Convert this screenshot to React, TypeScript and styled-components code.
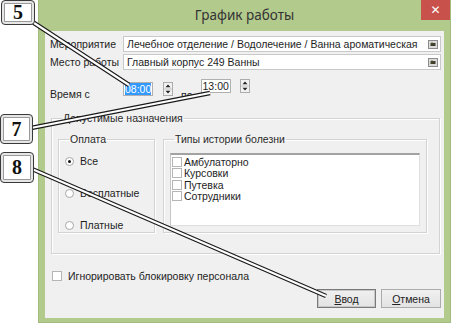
import styled, { createGlobalStyle } from "styled-components";

const GlobalStyle = createGlobalStyle`
  html, body {
    margin: 0;
    padding: 0;
    background: #ffffff;
  }
  body {
    font-family: "Liberation Sans", Arial, sans-serif;
    font-size: 10.5px;
    color: #1e1e1e;
  }
`;

const Stage = styled.div`
  position: relative;
  width: 456px;
  height: 325px;
  overflow: hidden;
  background: #ffffff;
`;

const Window = styled.div`
  margin-left: 38px;
  width: 413px;
  height: 323px;
  box-sizing: border-box;
  background: #b3ca8d;
  border: 1px solid #a3bb7c;
  border-top: none;
  display: flex;
  flex-direction: column;
  padding: 0 6px 4px 6px;
`;

const TitleBar = styled.div`
  height: 31px;
  display: grid;
  grid-template-columns: 1fr auto 1fr;
  margin: 0 -6px;
`;

const Title = styled.div`
  grid-column: 2;
  align-self: center;
  font-family: "Noto Sans", "Open Sans", sans-serif;
  font-size: 13.5px;
  color: #333333;
  padding-bottom: 2px;
`;

const CloseButton = styled.div`
  grid-column: 3;
  justify-self: end;
  align-self: start;
  width: 29px;
  height: 20px;
  background: #c9514c;
  color: #ffffff;
  font-family: "DejaVu Sans", sans-serif;
  font-size: 12px;
  font-weight: bold;
  display: flex;
  align-items: center;
  justify-content: center;
`;

const Content = styled.div`
  flex: 1;
  background: #f0f0f0;
  display: flex;
  flex-direction: column;
  padding: 5px 3px 0 5px;
`;

const FieldRow = styled.div<{ $gap?: number }>`
  display: flex;
  align-items: center;
  height: 16px;
  margin-top: ${(p) => p.$gap ?? 0}px;
`;

const Label = styled.div<{ $width?: number }>`
  width: ${(p) => p.$width ?? 73}px;
  flex-shrink: 0;
  white-space: nowrap;
`;

const Combo = styled.div`
  flex: 1;
  min-width: 0;
  height: 16px;
  box-sizing: border-box;
  background: #ffffff;
  border: 1px solid #c9c9c9;
  display: flex;
  align-items: center;
  padding: 0 2px 0 3px;
  white-space: nowrap;
  overflow: hidden;
`;

const ComboText = styled.span`
  flex: 1;
  min-width: 0;
  overflow: hidden;
  font-size: 10.5px;
`;

const TimeRow = styled.div`
  display: flex;
  align-items: flex-start;
  height: 19px;
  margin-top: 9px;
`;

const TimeLabel = styled.div`
  width: 73px;
  padding-top: 9px;
`;

const SpinGroup = styled.div<{ $top: number; $spin: number }>`
  display: flex;
  align-items: flex-start;
  gap: ${(p) => p.$spin}px;
  margin-top: ${(p) => p.$top}px;
`;

const TimeInput = styled.div`
  width: 30px;
  height: 14px;
  box-sizing: border-box;
  border: 1px solid #b0b0b0;
  background: #ffffff;
  display: flex;
  align-items: center;
  padding-left: 1px;
`;

const Selected = styled.span<{ $on?: boolean }>`
  background: ${(p) => (p.$on ? "#3399ff" : "transparent")};
  color: ${(p) => (p.$on ? "#ffffff" : "#1e1e1e")};
  line-height: 12px;
`;

const ToLabel = styled.div`
  margin: 10px 8px 0 8px;
`;

const GroupBox = styled.fieldset<{ $pad: string }>`
  margin: 0;
  min-width: 0;
  border: 1px solid #d3d3d3;
  box-shadow: inset 1px 1px 0 #ffffff, 1px 1px 0 #ffffff;
  padding: ${(p) => p.$pad};
  display: flex;
  flex-direction: column;
`;

const Legend = styled.legend`
  padding: 0 1px;
  margin-left: 4px;
  line-height: 14px;
  color: #2a2a2a;
`;

const OuterGroup = styled(GroupBox)`
  margin: 13px 1px 0 1px;
  height: 143px;
  box-sizing: border-box;
`;

const GroupsRow = styled.div`
  display: flex;
  gap: 8px;
  flex: 1;
  margin-right: 12px;
`;

const PayGroup = styled(GroupBox)`
  width: 97px;
  flex-shrink: 0;
  box-sizing: border-box;
  gap: 18px;
`;

const TypesGroup = styled(GroupBox)`
  flex: 1;
  box-sizing: border-box;
`;

const RadioRow = styled.div`
  display: flex;
  align-items: center;
  height: 14px;
  gap: 6px;
`;

const RadioDot = styled.span<{ $checked?: boolean }>`
  width: 9px;
  height: 9px;
  box-sizing: border-box;
  border-radius: 50%;
  border: 1px solid #a6a6a6;
  background: #ffffff;
  display: flex;
  align-items: center;
  justify-content: center;
  &::after {
    content: "";
    width: 3px;
    height: 3px;
    border-radius: 50%;
    background: ${(p) => (p.$checked ? "#111111" : "transparent")};
  }
`;

const ListBox = styled.div`
  flex: 1;
  background: #ffffff;
  border: 1px solid #dedede;
  border-top: 2px solid #a2a2a2;
  border-left: 1px solid #c6c6c6;
  padding: 1px 1px;
  display: flex;
  flex-direction: column;
`;

const ListItem = styled.div`
  display: flex;
  align-items: center;
  height: 11.5px;
  gap: 2px;
`;

const Check = styled.span<{ $size?: number }>`
  width: ${(p) => p.$size ?? 9}px;
  height: ${(p) => p.$size ?? 9}px;
  box-sizing: border-box;
  border: 1px solid #b5b5b5;
  background: #ffffff;
  flex-shrink: 0;
`;

const CheckRow = styled.div`
  display: flex;
  align-items: center;
  height: 14px;
  gap: 6px;
  margin: 15px 0 0 2px;
`;

const ButtonRow = styled.div`
  display: flex;
  justify-content: flex-end;
  gap: 5px;
  margin-top: 6px;
`;

const Button = styled.div<{ $default?: boolean; $width: number }>`
  width: ${(p) => p.$width}px;
  height: 19px;
  box-sizing: border-box;
  background: linear-gradient(#f0f0f0, #e3e3e3);
  border: 1px solid ${(p) => (p.$default ? "#7a7a7a" : "#acacac")};
  box-shadow: ${(p) => (p.$default ? "inset 0 0 0 1px #c8c8c8" : "none")};
  display: flex;
  align-items: center;
  justify-content: center;
  color: #222222;
  & u {
    text-decoration: underline;
  }
`;

const Overlay = styled.svg`
  position: absolute;
  left: 0;
  top: 0;
  pointer-events: none;
`;

const Callout = styled.div<{ $x: number; $y: number; $w: number; $h: number }>`
  position: absolute;
  left: ${(p) => p.$x}px;
  top: ${(p) => p.$y}px;
  width: ${(p) => p.$w}px;
  height: ${(p) => p.$h}px;
  box-sizing: border-box;
  border: 1px solid #3a3a3a;
  border-radius: 4px;
  background: #ffffff;
  box-shadow: inset 0 0 0 2px #e6e6e6, inset 0 0 0 3px #9a9a9a;
  display: flex;
  align-items: center;
  justify-content: center;
  font-family: "Liberation Serif", "Times New Roman", serif;
  font-weight: bold;
  font-size: 20px;
  color: #111111;
`;

function DropButton() {
  return (
    <svg width="10" height="9" viewBox="0 0 10 9">
      <rect x="0.5" y="0.5" width="9" height="8" fill="#dcdcdc" stroke="#8c8c8c" />
      <rect x="2.5" y="3" width="5" height="3" fill="#3f3f2a" />
      <rect x="3" y="2.5" width="2" height="1" fill="#6a6a40" />
    </svg>
  );
}

function Spinner() {
  return (
    <svg width="10" height="14" viewBox="0 0 10 14">
      <rect x="0.5" y="0.5" width="9" height="13" fill="#f2f2f2" stroke="#acacac" />
      <line x1="1" y1="7" x2="9" y2="7" stroke="#c4c4c4" />
      <path d="M5 2.5 L7.5 5.2 L2.5 5.2 Z" fill="#222" />
      <path d="M5 11.5 L7.5 8.8 L2.5 8.8 Z" fill="#222" />
    </svg>
  );
}

const pointers = [
  { x1: 31, y1: 21, x2: 129, y2: 85 },
  { x1: 31, y1: 128, x2: 210, y2: 93 },
  { x1: 32, y1: 169, x2: 326, y2: 296 },
];

export default function App() {
  return (
    <>
      <GlobalStyle />
      <Stage>
        <Window>
          <TitleBar>
            <Title>График работы</Title>
            <CloseButton>✕</CloseButton>
          </TitleBar>
          <Content>
            <FieldRow>
              <Label>Мероприятие</Label>
              <Combo>
                <ComboText>Лечебное отделение / Водолечение / Ванна ароматическая</ComboText>
                <DropButton />
              </Combo>
            </FieldRow>
            <FieldRow $gap={2}>
              <Label>Место работы</Label>
              <Combo>
                <ComboText>Главный корпус 249 Ванны</ComboText>
                <DropButton />
              </Combo>
            </FieldRow>
            <TimeRow>
              <TimeLabel>Время с</TimeLabel>
              <SpinGroup $top={3} $spin={10}>
                <TimeInput>
                  <Selected $on>08:00</Selected>
                </TimeInput>
                <Spinner />
              </SpinGroup>
              <ToLabel>по</ToLabel>
              <SpinGroup $top={0} $spin={9}>
                <TimeInput>
                  <Selected>13:00</Selected>
                </TimeInput>
                <Spinner />
              </SpinGroup>
            </TimeRow>
            <OuterGroup $pad="7px 0 10px 6px">
              <Legend>Допустимые назначения</Legend>
              <GroupsRow>
                <PayGroup $pad="8px 4px 0 6px">
                  <Legend>Оплата</Legend>
                  <RadioRow>
                    <RadioDot $checked />
                    Все
                  </RadioRow>
                  <RadioRow>
                    <RadioDot />
                    Бесплатные
                  </RadioRow>
                  <RadioRow>
                    <RadioDot />
                    Платные
                  </RadioRow>
                </PayGroup>
                <TypesGroup $pad="7px 6px 6px 6px">
                  <Legend>Типы истории болезни</Legend>
                  <ListBox>
                    {["Амбулаторно", "Курсовки", "Путевка", "Сотрудники"].map((t) => (
                      <ListItem key={t}>
                        <Check $size={10} />
                        {t}
                      </ListItem>
                    ))}
                  </ListBox>
                </TypesGroup>
              </GroupsRow>
            </OuterGroup>
            <CheckRow>
              <Check $size={10} />
              Игнорировать блокировку персонала
            </CheckRow>
            <ButtonRow>
              <Button $default $width={59}>
                <span>
                  <u>В</u>вод
                </span>
              </Button>
              <Button $width={60}>
                <span>
                  <u>О</u>тмена
                </span>
              </Button>
            </ButtonRow>
          </Content>
        </Window>

        <Overlay width="456" height="325" viewBox="0 0 456 325">
          {pointers.map((l, i) => (
            <g key={i}>
              <line {...l} stroke="#1a1a1a" strokeWidth="4.5" />
              <line {...l} stroke="#ffffff" strokeWidth="2.2" />
            </g>
          ))}
        </Overlay>
        <Callout $x={1} $y={0} $w={34} $h={25}>5</Callout>
        <Callout $x={0} $y={114} $w={33} $h={30}>7</Callout>
        <Callout $x={0} $y={152} $w={34} $h={31}>8</Callout>
      </Stage>
    </>
  );
}
